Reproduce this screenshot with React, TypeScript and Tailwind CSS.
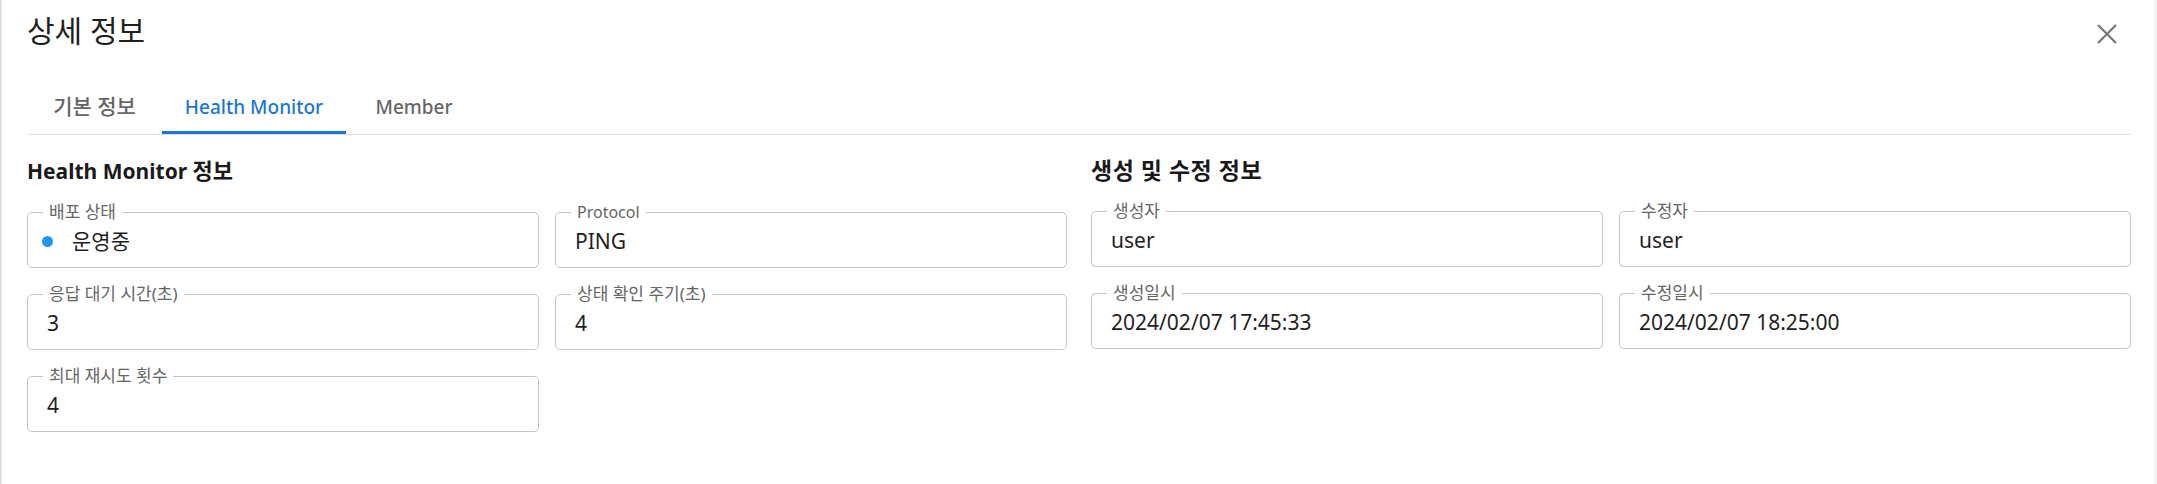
import React from 'react';

type FieldProps = { label: string; value: string; dot?: boolean };

const hasHangul = (s: string) => /[가-힣]/.test(s);

const Field: React.FC<FieldProps> = ({ label, value, dot }) => {
  return (
    <div
      className={`relative h-[56px] rounded-[5px] border border-[#c4c4c4] flex items-center pt-[2px] ${
        dot ? 'pl-[14px] gap-[19px]' : 'pl-[19px]'
      }`}
    >
      <span
        className={`absolute left-[15px] top-[-1px] -translate-y-1/2 bg-white px-[6px] leading-[18px] text-[#666666] whitespace-nowrap ${
          hasHangul(label) ? 'text-[17px]' : 'text-[16px]'
        }`}
      >
        {label}
      </span>
      {dot && <span className="w-[11px] h-[11px] rounded-full bg-[#2196f3] shrink-0" />}
      <span className="text-[21px] leading-[28px] text-[#1f1f1f]">{value}</span>
    </div>
  );
};

const tabs = [
  { name: '기본 정보', w: 'w-[135px]', size: 'text-[21px]', active: false },
  { name: 'Health Monitor', w: 'w-[184px]', size: 'text-[19px]', active: true },
  { name: 'Member', w: 'w-[136px]', size: 'text-[19px]', active: false },
];

export default function App() {
  return (
    <div className="h-screen min-h-[484px] bg-[#f3f3f3] border-l-2 border-[#e2e2e2] pr-[3px] font-['Noto_Sans','Noto_Sans_CJK_KR',sans-serif]">
      <div className="h-full bg-white pl-[25px] pr-[23px]">
        {/* Header */}
        <div className="h-[84px] flex items-start justify-between">
          <h2 className="mt-[12px] text-[30px] leading-[38px] text-[#1f1f1f] font-normal">상세 정보</h2>
          <button className="mt-[18px] mr-[8px] w-[32px] h-[32px] flex items-center justify-center text-[#757575]">
            <svg width="20" height="20" viewBox="0 0 20 20" fill="none" stroke="currentColor" strokeWidth="2.2">
              <path d="M1 1L19 19M19 1L1 19" />
            </svg>
          </button>
        </div>

        {/* Tabs */}
        <div className="flex border-b border-[#e0e0e0]">
          {tabs.map((t) => (
            <div
              key={t.name}
              className={`relative ${t.w} ${t.size} h-[50px] flex items-center justify-center pb-[4px] font-medium whitespace-nowrap ${
                t.active ? 'text-[#1976d2]' : 'text-[#666666]'
              }`}
            >
              {t.name}
              {t.active && <span className="absolute left-0 right-0 bottom-0 h-[3px] bg-[#1976d2]" />}
            </div>
          ))}
        </div>

        {/* Sections */}
        <div className="flex gap-[24px] pt-[21px]">
          <div className="flex-1">
            <h3 className="text-[21px] leading-[28px] font-bold text-[#1a1a1a] mb-[27px]">
              Health Monitor <span className="text-[22px]">정보</span>
            </h3>
            <div className="grid grid-cols-2 gap-x-[16px] gap-y-[26px]">
              <Field label="배포 상태" value="운영중" dot />
              <Field label="Protocol" value="PING" />
              <Field label="응답 대기 시간(초)" value="3" />
              <Field label="상태 확인 주기(초)" value="4" />
              <Field label="최대 재시도 횟수" value="4" />
            </div>
          </div>
          <div className="flex-1">
            <h3 className="text-[23px] leading-[28px] font-bold text-[#1a1a1a] tracking-[0.5px] mb-[27px]">생성 및 수정 정보</h3>
            <div className="grid grid-cols-2 gap-x-[16px] gap-y-[26px]">
              <Field label="생성자" value="user" />
              <Field label="수정자" value="user" />
              <Field label="생성일시" value="2024/02/07 17:45:33" />
              <Field label="수정일시" value="2024/02/07 18:25:00" />
            </div>
          </div>
        </div>
      </div>
    </div>
  );
}
